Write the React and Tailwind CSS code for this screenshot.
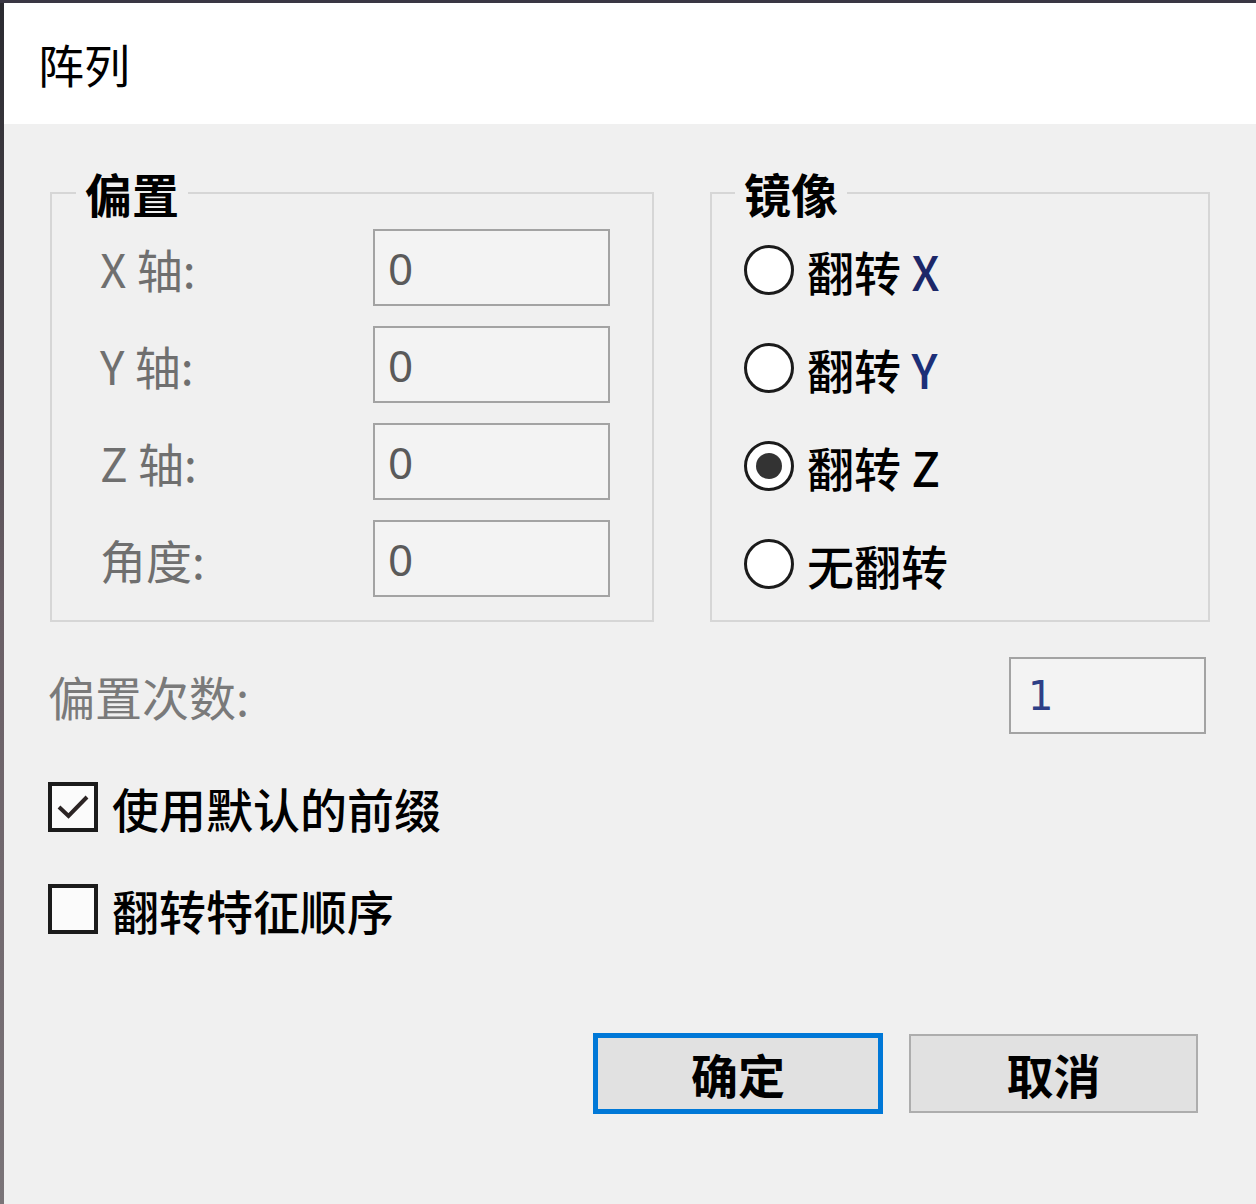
import React, { useState } from 'react'

const cjk = "font-['Noto_Sans_CJK_SC','Noto_Sans',sans-serif]"

function Field({ label, value }) {
  return (
    <div className="flex h-[77px] items-center">
      <div className="w-[321px] pl-[48px] text-[46px] leading-none text-[#6f6f6f]">{label}</div>
      <div className="flex h-[77px] w-[237px] items-center border-2 border-[#a3a3a3] bg-[#f3f3f3] pl-[13px] font-['Noto_Sans',sans-serif] text-[44px] text-[#5a5a5a]">
        {value}
      </div>
    </div>
  )
}

function Radio({ checked, children, onSelect }) {
  return (
    <button type="button" onClick={onSelect} className="flex h-[82px] items-center gap-[13px] text-left">
      <span className="flex h-[50px] w-[50px] items-center justify-center rounded-full border-[3px] border-[#1b1b1b] bg-white">
        {checked && <span className="h-[26px] w-[26px] rounded-full bg-[#333333]" />}
      </span>
      <span className="text-[47px] font-medium leading-none text-black">{children}</span>
    </button>
  )
}

function Check({ checked, children, onToggle }) {
  return (
    <button type="button" onClick={onToggle} className="flex h-[50px] items-center gap-[14px] text-left">
      <span className="flex h-[50px] w-[50px] items-center justify-center border-4 border-[#1b1b1b] bg-[#fbfbfb]">
        {checked && (
          <svg width="34" height="26" viewBox="0 0 34 26" fill="none">
            <path d="M3 13 L12.5 22 L31 3" stroke="#2b2424" strokeWidth="4" strokeLinejoin="miter" />
          </svg>
        )}
      </span>
      <span className="text-[47px] font-medium leading-none text-black">{children}</span>
    </button>
  )
}

export default function App() {
  const [mirror, setMirror] = useState('z')
  const [usePrefix, setUsePrefix] = useState(true)
  const [reverse, setReverse] = useState(false)

  const mirrors = [
    ['x', <>翻转 <span className="text-[#1c2768]">X</span></>],
    ['y', <>翻转 <span className="text-[#1c2f78]">Y</span></>],
    ['z', '翻转 Z'],
    ['none', '无翻转'],
  ]

  return (
    <div className={`flex h-[1204px] w-[1256px] flex-col bg-[#3a3744] ${cjk}`}>
      <div className="h-[3px] shrink-0" />
      <div className="flex flex-1">
        <div className="w-[4px] bg-gradient-to-b from-[#2a2a30] via-[#6a5f66] to-[#7a7478]" />
        <div className="flex flex-1 flex-col">
          <div className="flex h-[121px] shrink-0 items-center bg-white pl-[34px] pb-[2px]">
            <span className="text-[46px] leading-none text-black">阵列</span>
          </div>

          <div className="flex flex-1 flex-col bg-[#f0f0f0] pl-[44px] pr-[46px] pt-[45px]">
            <div className="flex gap-[56px] pl-[2px]">
              <fieldset className="w-[604px] border-2 border-[#d6d6d6] px-0 pb-[15px] pt-[12px]">
                <legend className="ml-[24px] px-[9px] text-[47px] font-bold leading-[48px] text-black">偏置</legend>
                <div className="flex flex-col gap-[20px]">
                  <Field label="X 轴:" value="0" />
                  <Field label="Y 轴:" value="0" />
                  <Field label="Z 轴:" value="0" />
                  <Field label="角度:" value="0" />
                </div>
              </fieldset>

              <fieldset className="flex-1 border-2 border-[#d6d6d6] px-0 pb-[15px] pt-[12px]">
                <legend className="ml-[23px] px-[9px] text-[47px] font-bold leading-[48px] text-black">镜像</legend>
                <div className="flex flex-col gap-[16px] pl-[32px]">
                  {mirrors.map(([key, label]) => (
                    <Radio key={key} checked={mirror === key} onSelect={() => setMirror(key)}>
                      {label}
                    </Radio>
                  ))}
                </div>
              </fieldset>
            </div>

            <div className="mt-[35px] flex h-[77px] items-center justify-between pr-[4px]">
              <span className="text-[47px] leading-none text-[#7a7a7a]">偏置次数:</span>
              <div className="flex h-[77px] w-[197px] items-center border-2 border-[#a3a3a3] bg-[#f3f3f3] pl-[17px] font-['DejaVu_Sans',sans-serif] text-[40px] text-[#2e3f86]">
                1
              </div>
            </div>

            <div className="mt-[48px] flex flex-col gap-[52px]">
              <Check checked={usePrefix} onToggle={() => setUsePrefix(!usePrefix)}>使用默认的前缀</Check>
              <Check checked={reverse} onToggle={() => setReverse(!reverse)}>翻转特征顺序</Check>
            </div>

            <div className="mt-[99px] flex justify-end gap-[26px] pr-[12px]">
              <button type="button" className="flex h-[81px] w-[290px] items-center justify-center border-[5px] border-[#0078d7] bg-[#e1e1e1] text-[47px] font-bold leading-none text-black">
                确定
              </button>
              <button type="button" className="mt-[1px] flex h-[79px] w-[289px] items-center justify-center border-2 border-[#adadad] bg-[#e1e1e1] text-[47px] font-bold leading-none text-black">
                取消
              </button>
            </div>
          </div>
        </div>
      </div>
    </div>
  )
}
